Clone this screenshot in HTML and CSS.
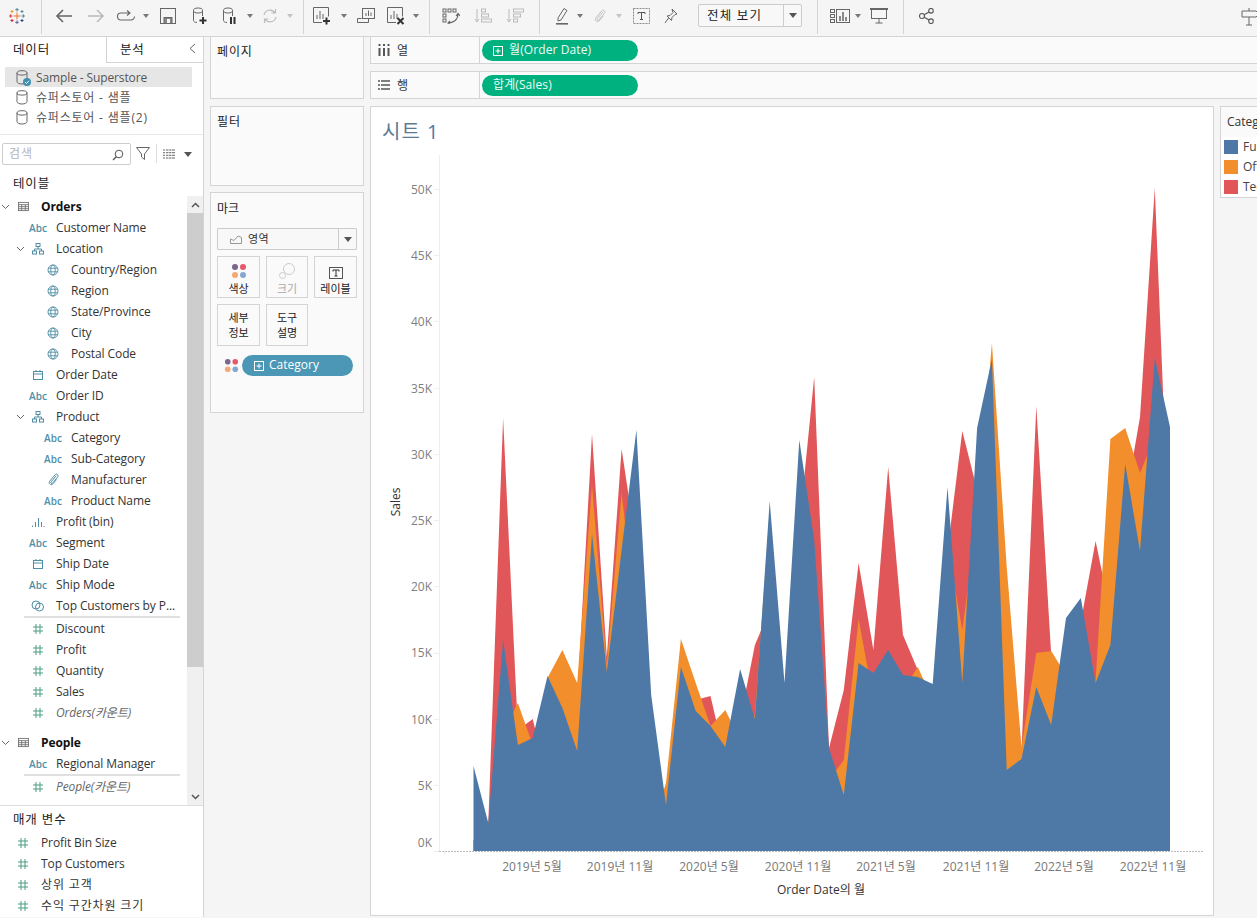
FILE: index.html
```html
<!DOCTYPE html>
<html lang="ko">
<head>
<meta charset="utf-8">
<title>Tableau - 시트 1</title>
<link rel="stylesheet" href="styles.css">
</head>
<body>
<svg class="defs" width="0" height="0" aria-hidden="true">
  <symbol id="db" viewBox="0 0 12 15"><g fill="none" stroke="#666" stroke-width="1"><ellipse cx="6" cy="2.900" rx="5" ry="2.200"/><path d="M1 2.900v8.800c0 1.300 2.200 2.300 5 2.300s5-1 5-2.300V2.900"/></g></symbol>
  <symbol id="hash" viewBox="0 0 12 12"><path d="M4 1v10M8 1v10M1 4h10M1 8h10" fill="none" stroke="#4a9d80" stroke-width="1"/></symbol>
  <symbol id="globe" viewBox="0 0 12 12"><g fill="none" stroke="#4f8ea6" stroke-width=".9"><circle cx="6" cy="6" r="5"/><ellipse cx="6" cy="6" rx="2.200" ry="5"/><path d="M1 4.200h10M1 7.800h10"/></g></symbol>
  <symbol id="cal" viewBox="0 0 12 12"><g fill="none" stroke="#4f8ea6" stroke-width="1"><rect x="1.500" y="2.500" width="9" height="8"/><path d="M1.500 5h9M4 1v2M8 1v2"/></g></symbol>
  <symbol id="hier" viewBox="0 0 12 12"><g fill="none" stroke="#4f8ea6" stroke-width="1"><rect x="4" y=".5" width="4" height="3"/><rect x=".5" y="8" width="4" height="3"/><rect x="7.500" y="8" width="4" height="3"/><path d="M6 3.500V6M2.500 8V6h7v2"/></g></symbol>
  <symbol id="clip" viewBox="0 0 12 12"><path d="M8.500 2.500 3.700 8.300c-.7 1 .6 2 1.400 1.100L9.800 3.700C11.200 1.800 8.800 0 7.400 1.700L2.500 7.500C.8 9.700 3.800 12 5.500 10l3.300-4" fill="none" stroke="#4f8ea6" stroke-width=".9"/></symbol>
  <symbol id="bins" viewBox="0 0 14 12"><path d="M1.500 11V9.500M4.500 11V6M7.500 11V2M10.500 11V6M13 11v-1" fill="none" stroke="#4f8ea6" stroke-width="1"/></symbol>
  <symbol id="sets" viewBox="0 0 14 12"><g fill="none" stroke="#4f8ea6" stroke-width="1"><circle cx="5" cy="5" r="4"/><circle cx="8.500" cy="7" r="4"/></g></symbol>
  <symbol id="table" viewBox="0 0 12 12"><g fill="none" stroke="#666" stroke-width=".9"><rect x=".5" y="1.500" width="11" height="9"/><path d="M.5 4h11M.5 6.200h11M.5 8.400h11M4 4v6.500M8 4v6.500"/></g></symbol>
  <symbol id="chev" viewBox="0 0 9 6"><path d="M1 1l3.500 3.500L8 1" fill="none" stroke="#666" stroke-width="1"/></symbol>
  <symbol id="plusbox" viewBox="0 0 10 10"><g fill="none" stroke="#fff" stroke-width="1"><rect x=".5" y=".5" width="9" height="9"/><path d="M5 2.500v5M2.500 5h5"/></g></symbol>
  <symbol id="dots" viewBox="0 0 16 16"><circle cx="4" cy="4" r="3" fill="#7b668c"/><circle cx="12" cy="4" r="3" fill="#e5596b"/><circle cx="4" cy="12" r="3" fill="#f2a877"/><circle cx="12" cy="12" r="3" fill="#86a8d0"/></symbol>
</svg>

<header class="toolbar">
  <div class="tgroup logo-group">
    <svg class="ic" width="18" height="18" viewBox="0 0 18 18"><g fill="none" stroke-width="1"><path d="M9 5.500v7M5.500 9h7" stroke="#e8762d"/><path d="M9 1v3.500M7.200 2.700h3.600" stroke="#5b879b"/><path d="M9 13.500V17M7.200 15.300h3.600" stroke="#5b6592"/><path d="M1 9h3.500M2.700 7.200v3.600" stroke="#d0414f"/><path d="M13.500 9H17M15.300 7.200v3.600" stroke="#4f8ea6"/><path d="M4 3v3M2.500 4.500h3" stroke="#e8a02d"/><path d="M14 3v3M12.500 4.500h3" stroke="#5b879b"/><path d="M4 12v3M2.500 13.500h3" stroke="#c72037"/><path d="M14 12v3M12.500 13.500h3" stroke="#1f447b"/></g></svg>
  </div>
  <div class="tgroup g-history">
    <span class="tb w32"><svg width="18" height="16" viewBox="0 0 18 16"><path d="M17 8H2M8 2 2 8l6 6" fill="none" stroke="#666" stroke-width="1.600"/></svg></span>
    <span class="tb w32"><svg width="18" height="16" viewBox="0 0 18 16"><path d="M1 8h15M10 2l6 6-6 6" fill="none" stroke="#bbb" stroke-width="1.600"/></svg></span>
    <span class="tb w28"><svg width="20" height="12" viewBox="0 0 20 12"><path d="M14 3H5a3.500 3.500 0 0 0 0 7h10a3.500 3.500 0 0 0 3.500-3.500M11 0.500 14 3l-3 2.500" fill="none" stroke="#666" stroke-width="1.100"/></svg></span>
    <span class="tb w12"><i class="caret"></i></span>
    <span class="tb w32"><svg width="16" height="16" viewBox="0 0 16 16"><g fill="none" stroke="#666" stroke-width="1"><rect x=".5" y=".5" width="15" height="15"/><rect x="4" y="9.500" width="8" height="6" fill="#888"/><rect x="7" y="11" width="3" height="4" fill="#f5f5f5" stroke="none"/></g></svg></span>
    <span class="tb w32"><svg width="16" height="18" viewBox="0 0 16 18"><g fill="none" stroke="#666" stroke-width="1"><ellipse cx="6" cy="3.500" rx="4.500" ry="2.500"/><path d="M1.500 3.500v10c0 1 1.500 2 3.500 2M10.500 3.500V9"/></g><path d="M11 10v7M7.500 13.500h7" stroke="#333" stroke-width="2"/></svg></span>
    <span class="tb w28"><svg width="16" height="18" viewBox="0 0 16 18"><g fill="none" stroke="#666" stroke-width="1"><ellipse cx="6" cy="3.500" rx="4.500" ry="2.500"/><path d="M1.500 3.500v10c0 1 1.500 2 3.500 2M10.500 3.500V9"/></g><path d="M9 10v7M12.500 10v7" stroke="#333" stroke-width="2"/></svg></span>
    <span class="tb w12"><i class="caret"></i></span>
    <span class="tb w28"><svg width="18" height="16" viewBox="0 0 18 16"><path d="M3 7a6 6 0 0 1 11-2M15 9a6 6 0 0 1-11 2M14.500 1v4h-4M3.500 15v-4h4" fill="none" stroke="#bbb" stroke-width="1.200"/></svg></span>
    <span class="tb w12"><i class="caret off"></i></span>
  </div>
  <div class="tgroup g-sheets">
    <span class="tb w32"><svg width="18" height="18" viewBox="0 0 18 18"><g fill="none" stroke="#666" stroke-width="1"><path d="M9 15.500H.5V.5h15v9"/><path d="M4 12V8M7 12V4M10 12V7"/></g><path d="M13.500 10.500v7M10 14h7" stroke="#333" stroke-width="2"/></svg></span>
    <span class="tb w12"><i class="caret"></i></span>
    <span class="tb w32"><svg width="18" height="16" viewBox="0 0 18 16"><g fill="none" stroke="#666" stroke-width="1"><path d="M4.500 10.500h-4v4h11v-4"/><rect x="5.500" y=".5" width="12" height="10" fill="#f5f5f5"/><path d="M9 8V5M11.500 8V2.500M14 8V4.500"/></g></svg></span>
    <span class="tb w28"><svg width="18" height="18" viewBox="0 0 18 18"><g fill="none" stroke="#666" stroke-width="1"><path d="M9 15.500H.5V.5h15v9"/><path d="M4 12V8M7 12V4M10 12V7"/></g><path d="M10.500 11l6 6M16.500 11l-6 6" stroke="#333" stroke-width="2"/></svg></span>
    <span class="tb w12"><i class="caret"></i></span>
  </div>
  <div class="tgroup g-sort">
    <span class="tb w32"><svg width="18" height="16" viewBox="0 0 18 16"><g fill="none" stroke="#666" stroke-width="1"><rect x="1" y="1" width="3" height="3"/><rect x="6" y="1" width="3" height="3"/><rect x="11" y="1" width="3" height="3"/><rect x="1" y="6" width="3" height="3"/><rect x="1" y="11" width="3" height="3"/><path d="M6 15c5 0 10-3 10-9M14 8l2-2.500 2 2.500M8 13l-2 2 2 1" stroke-width="1.100"/></g></svg></span>
    <span class="tb w32"><svg width="18" height="16" viewBox="0 0 18 16"><g fill="none" stroke="#bbb" stroke-width="1"><path d="M3 1v13M1 11l2 3 2-3"/><rect x="7.500" y="1" width="4" height="3"/><rect x="7.500" y="6" width="7" height="3"/><rect x="7.500" y="11" width="10" height="3"/></g></svg></span>
    <span class="tb w32"><svg width="18" height="16" viewBox="0 0 18 16"><g fill="none" stroke="#bbb" stroke-width="1"><path d="M3 1v13M1 11l2 3 2-3"/><rect x="7.500" y="1" width="10" height="3"/><rect x="7.500" y="6" width="7" height="3"/><rect x="7.500" y="11" width="4" height="3"/></g></svg></span>
  </div>
  <div class="tgroup g-format">
    <span class="tb w24"><svg width="14" height="18" viewBox="0 0 14 18"><path d="M3 11 9 1.500l3 2-6 9.500-3 1z" fill="none" stroke="#666"/><path d="M1 16.800h12" stroke="#666" stroke-width="1.600"/></svg></span>
    <span class="tb w12"><i class="caret"></i></span>
    <span class="tb w27"><svg width="14" height="16" viewBox="0 0 12 12"><path d="M8.500 2.500 3.700 8.300c-.7 1 .6 2 1.400 1.100L9.800 3.700C11.200 1.800 8.800 0 7.400 1.700L2.500 7.500C.8 9.700 3.800 12 5.500 10l3.300-4" fill="none" stroke="#bbb" stroke-width=".8"/></svg></span>
    <span class="tb w12"><i class="caret off"></i></span>
    <span class="tb w32"><svg width="17" height="16" viewBox="0 0 17 16"><rect x=".5" y=".5" width="16" height="15" fill="none" stroke="#888" stroke-dasharray="2 1"/><path d="M5 4.500h7M8.500 4.500v7M7 11.500h3M5 4.500V6M12 4.500V6" fill="none" stroke="#555"/></svg></span>
    <span class="tb w28"><svg width="14" height="16" viewBox="0 0 14 16"><path d="M8 1l5 5-2 .5-3 3-.5 3L3 8l3-.5 3-3zM4.500 10 1 15" fill="none" stroke="#666"/></svg></span>
    <div class="fit-select"><span class="fit-label">전체 보기</span><span class="fit-arrow"><i class="caret dark"></i></span></div>
  </div>
  <div class="tgroup g-show">
    <span class="tb w24"><svg width="20" height="14" viewBox="0 0 20 14"><g fill="none" stroke="#666" stroke-width="1"><rect x=".5" y=".5" width="4" height="3"/><rect x=".5" y="5.500" width="4" height="3"/><rect x=".5" y="10.500" width="4" height="3"/><rect x="6.500" y=".5" width="13" height="13"/><path d="M10 12V7M13 12V3M16 12V8" stroke-width="1.500"/></g></svg></span>
    <span class="tb w12"><i class="caret"></i></span>
    <span class="tb w30"><svg width="18" height="16" viewBox="0 0 18 16"><g fill="none" stroke="#666" stroke-width="1"><path d="M0 1h18" stroke-width="2"/><rect x="1.500" y="1" width="15" height="9.500"/><path d="M9 10.500V15M5.500 15h7"/></g></svg></span>
  </div>
  <div class="tgroup g-share">
    <span class="tb w32"><svg width="15" height="16" viewBox="0 0 15 16"><g fill="none" stroke="#555" stroke-width="1.100"><circle cx="3" cy="8" r="2.500"/><circle cx="12" cy="2.800" r="2.300"/><circle cx="12" cy="13.200" r="2.300"/><path d="M5.200 6.800l4.800-2.800M5.200 9.200l4.800 2.800"/></g></svg></span>
  </div>
  <span class="tb guide"><svg width="19" height="18" viewBox="0 0 19 18"><path d="M1 3h14l3 3-3 3H1zM8 0v3M8 9v8M5 17h6" fill="none" stroke="#666"/></svg></span>
</header>

<main class="workspace">
  <aside class="data-pane">
    <div class="tabs">
      <div class="tab active ko">데이터</div>
      <div class="tab"><span class="ko">분석</span><svg class="collapse" width="7" height="11" viewBox="0 0 7 11"><path d="M6 1 1 5.500 6 10" fill="none" stroke="#666"/></svg></div>
    </div>
    <div class="sources">
      <div class="source selected"><svg class="db" width="12" height="15"><use href="#db"/></svg><svg class="db-check" width="8" height="8" viewBox="0 0 8 8"><circle cx="4" cy="4" r="4" fill="#3f8fb0"/><path d="M2 4l1.500 1.500L6 2.800" fill="none" stroke="#fff"/></svg><span class="src-name">Sample - Superstore</span></div>
      <div class="source"><svg class="db" width="12" height="15"><use href="#db"/></svg><span class="src-name ko">슈퍼스토어 - 샘플</span></div>
      <div class="source"><svg class="db" width="12" height="15"><use href="#db"/></svg><span class="src-name ko">슈퍼스토어 - 샘플(2)</span></div>
    </div>
    <div class="search-row">
      <div class="search"><span>검색</span><svg width="12" height="12" viewBox="0 0 12 12"><circle cx="7" cy="5" r="3.800" fill="none" stroke="#555"/><path d="M4.300 7.800 1 11" stroke="#555" stroke-width="1.300"/></svg></div>
      <svg class="funnel" width="14" height="13" viewBox="0 0 14 13"><path d="M.5.500h13L8.500 7v5.500L5.500 10V7z" fill="none" stroke="#666"/></svg>
      <span class="vbar"></span>
      <svg class="gridic" width="12" height="10" viewBox="0 0 12 10"><path d="M0 1h2M3 1h9M0 3.700h2M3 3.700h9M0 6.300h2M3 6.300h9M0 9h2M3 9h9" stroke="#666"/><path d="M5.500 0v10M8.500 0v10" stroke="#f5f5f5" stroke-width=".6"/></svg>
      <i class="caret dark gridcaret"></i>
    </div>
    <div class="section-head ko">테이블</div>
    <div class="fields">
      <div class="field-list">
        <div class="row d0x"><svg class="chev" width="9" height="6"><use href="#chev"/></svg><span class="ico"><svg width="11" height="11"><use href="#table"/></svg></span><b class="name">Orders</b></div>
        <div class="row d1"><span class="ico abc">Abc</span><span class="name">Customer Name</span></div>
        <div class="row d1x"><svg class="chev" width="9" height="6"><use href="#chev"/></svg><span class="ico"><svg width="12" height="12"><use href="#hier"/></svg></span><span class="name">Location</span></div>
        <div class="row d2"><span class="ico"><svg width="12" height="12"><use href="#globe"/></svg></span><span class="name">Country/Region</span></div>
        <div class="row d2"><span class="ico"><svg width="12" height="12"><use href="#globe"/></svg></span><span class="name">Region</span></div>
        <div class="row d2"><span class="ico"><svg width="12" height="12"><use href="#globe"/></svg></span><span class="name">State/Province</span></div>
        <div class="row d2"><span class="ico"><svg width="12" height="12"><use href="#globe"/></svg></span><span class="name">City</span></div>
        <div class="row d2"><span class="ico"><svg width="12" height="12"><use href="#globe"/></svg></span><span class="name">Postal Code</span></div>
        <div class="row d1"><span class="ico"><svg width="12" height="12"><use href="#cal"/></svg></span><span class="name">Order Date</span></div>
        <div class="row d1"><span class="ico abc">Abc</span><span class="name">Order ID</span></div>
        <div class="row d1x"><svg class="chev" width="9" height="6"><use href="#chev"/></svg><span class="ico"><svg width="12" height="12"><use href="#hier"/></svg></span><span class="name">Product</span></div>
        <div class="row d2"><span class="ico abc">Abc</span><span class="name">Category</span></div>
        <div class="row d2"><span class="ico abc">Abc</span><span class="name">Sub-Category</span></div>
        <div class="row d2"><span class="ico"><svg width="13" height="13"><use href="#clip"/></svg></span><span class="name">Manufacturer</span></div>
        <div class="row d2"><span class="ico abc">Abc</span><span class="name">Product Name</span></div>
        <div class="row d1"><span class="ico"><svg width="14" height="12"><use href="#bins"/></svg></span><span class="name">Profit (bin)</span></div>
        <div class="row d1"><span class="ico abc">Abc</span><span class="name">Segment</span></div>
        <div class="row d1"><span class="ico"><svg width="12" height="12"><use href="#cal"/></svg></span><span class="name">Ship Date</span></div>
        <div class="row d1"><span class="ico abc">Abc</span><span class="name">Ship Mode</span></div>
        <div class="row d1"><span class="ico"><svg width="14" height="12"><use href="#sets"/></svg></span><span class="name">Top Customers by P...</span></div>
        <div class="divider thick"></div>
        <div class="row d1"><span class="ico"><svg width="12" height="12"><use href="#hash"/></svg></span><span class="name">Discount</span></div>
        <div class="row d1"><span class="ico"><svg width="12" height="12"><use href="#hash"/></svg></span><span class="name">Profit</span></div>
        <div class="row d1"><span class="ico"><svg width="12" height="12"><use href="#hash"/></svg></span><span class="name">Quantity</span></div>
        <div class="row d1"><span class="ico"><svg width="12" height="12"><use href="#hash"/></svg></span><span class="name">Sales</span></div>
        <div class="row d1"><span class="ico"><svg width="12" height="12"><use href="#hash"/></svg></span><em class="name">Orders(카운트)</em></div>
        <div class="row d0x table-gap"><svg class="chev" width="9" height="6"><use href="#chev"/></svg><span class="ico"><svg width="11" height="11"><use href="#table"/></svg></span><b class="name">People</b></div>
        <div class="row d1"><span class="ico abc">Abc</span><span class="name">Regional Manager</span></div>
        <div class="divider thick"></div>
        <div class="row d1"><span class="ico"><svg width="12" height="12"><use href="#hash"/></svg></span><em class="name">People(카운트)</em></div>
      </div>
      <div class="scrollbar">
        <span class="sb-btn"><svg width="9" height="6" viewBox="0 0 9 6"><path d="M1 5l3.500-3.500L8 5" fill="none" stroke="#555" stroke-width="1.500"/></svg></span>
        <span class="sb-thumb"></span>
        <span class="sb-rest"></span>
        <span class="sb-btn"><svg width="9" height="6" viewBox="0 0 9 6"><path d="M1 1l3.500 3.500L8 1" fill="none" stroke="#555" stroke-width="1.500"/></svg></span>
      </div>
    </div>
    <div class="params">
      <div class="section-head param-head ko">매개 변수</div>
      <div class="row p0"><span class="ico"><svg width="12" height="12"><use href="#hash"/></svg></span><span class="name">Profit Bin Size</span></div>
      <div class="row p0"><span class="ico"><svg width="12" height="12"><use href="#hash"/></svg></span><span class="name">Top Customers</span></div>
      <div class="row p0"><span class="ico"><svg width="12" height="12"><use href="#hash"/></svg></span><span class="name ko">상위 고객</span></div>
      <div class="row p0"><span class="ico"><svg width="12" height="12"><use href="#hash"/></svg></span><span class="name ko">수익 구간차원 크기</span></div>
    </div>
  </aside>

  <section class="cards-pane">
    <div class="card pages"><div class="card-title ko">페이지</div></div>
    <div class="card filters"><div class="card-title ko">필터</div></div>
    <div class="card marks">
      <div class="card-title">마크</div>
      <div class="mark-select">
        <svg width="12" height="10" viewBox="0 0 12 10"><path d="M.5 9.500V5L4 6.500 8 2l3.500 1.500v6z" fill="none" stroke="#999"/></svg>
        <span class="mark-label">영역</span>
        <span class="mark-arrow"><i class="caret dark"></i></span>
      </div>
      <div class="mark-grid">
        <div class="mark-btn"><svg width="16" height="16"><use href="#dots"/></svg><span>색상</span></div>
        <div class="mark-btn off"><svg width="16" height="16" viewBox="0 0 16 16"><g fill="none" stroke="#ccc"><circle cx="10" cy="6" r="5.500"/><circle cx="3.500" cy="12.500" r="3"/></g></svg><span>크기</span></div>
        <div class="mark-btn"><svg width="14" height="12" viewBox="0 0 14 12"><rect x=".5" y=".5" width="13" height="11" fill="none" stroke="#555"/><path d="M4 3h6M7 3v6M5.500 9h3M4 3v1.500M10 3v1.500" fill="none" stroke="#333"/></svg><span>레이블</span></div>
        <div class="mark-btn text"><span>세부</span><span>정보</span></div>
        <div class="mark-btn text"><span>도구</span><span>설명</span></div>
      </div>
      <div class="mark-pill-row">
        <svg width="16" height="16"><use href="#dots"/></svg>
        <div class="pill blue"><svg width="10" height="10"><use href="#plusbox"/></svg><span>Category</span></div>
      </div>
    </div>
  </section>

  <section class="view-pane">
    <div class="shelf">
      <div class="shelf-label"><svg width="12" height="12" viewBox="0 0 12 12"><path d="M1.500 4v8M6 4v8M10.500 4v8" stroke="#555" stroke-width="2"/><path d="M1.500 0v2M6 0v2M10.500 0v2" stroke="#555" stroke-width="2"/></svg><span class="shelf-text">열</span></div>
      <div class="shelf-body"><div class="pill green"><svg width="10" height="10"><use href="#plusbox"/></svg><span>월(Order Date)</span></div></div>
    </div>
    <div class="shelf">
      <div class="shelf-label"><svg width="12" height="12" viewBox="0 0 12 12"><path d="M0 2h2M3 2h9M0 6h2M3 6h9M0 10h2M3 10h9" stroke="#555" stroke-width="1.500"/></svg><span class="shelf-text">행</span></div>
      <div class="shelf-body"><div class="pill green row-pill"><span>합계(Sales)</span></div></div>
    </div>
    <div class="view-body">
      <div class="sheet">
        <div class="sheet-title">시트 <span class="title-num">1</span></div>
        <svg class="chart" width="842" height="763" viewBox="371 151 842 763">
          <g class="gridlines">
            <path d="M439.500 155V851"/>
            <path d="M434 851.500h5M434 785.500h5M434 719.500h5M434 653.500h5M434 586.500h5M434 520.500h5M434 454.500h5M434 388.500h5M434 321.500h5M434 255.500h5M434 189.500h5"/>
            <path d="M444.500 851v4M532.500 851v4M621.500 851v4M710.500 851v4M799.500 851v4M887.500 851v4M977.500 851v4M1065.500 851v4M1154.500 851v4"/>
          </g>
          <polygon fill="#e15759" points="473.5,851 473.5,840 488.3,823 503.1,418 517.9,730 532.7,719 547.5,780 562.4,720 577.2,700 592,434 606.8,657 621.6,449 636.4,547 651.2,830 666,800 680.9,720 695.7,700 710.5,696 725.3,760 740.1,720 754.9,645 769.7,610 784.5,700 799.3,527 814.2,377 829,748 843.8,690 858.6,563 873.4,650 888.2,467 903,635 917.8,670 932.7,700 947.5,551 962.3,431 977.1,490 991.9,500 1006.7,800 1021.5,750 1036.3,406 1051.2,655 1066,700 1080.8,622 1095.6,541 1110.4,613 1125.2,503 1140,417 1154.8,188 1170,565 1170,851"/>
          <polygon fill="#f28e2b" points="473.5,851 473.5,840 488.3,823 503.1,732 517.9,703 532.7,745 547.5,678 562.4,650 577.2,683 592,485 606.8,665 621.6,493 636.4,620 651.2,830 666,783 680.9,639 695.7,683 710.5,726 725.3,710 740.1,740 754.9,715 769.7,510 784.5,720 799.3,600 814.2,600 829,780 843.8,760 858.6,619 873.4,699 888.2,700 903,690 917.8,667 932.7,700 947.5,545 962.3,630 977.1,520 991.9,343 1006.7,567 1021.5,747 1036.3,653 1051.2,651 1066,675 1080.8,700 1095.6,681 1110.4,439 1125.2,428 1140,473 1154.8,437 1170,600 1170,851"/>
          <polygon fill="#4e79a7" points="473.5,851 473.5,766 488.3,823 503.1,640 517.9,745 532.7,738 547.5,676 562.4,708 577.2,751 592,534 606.8,672 621.6,550 636.4,430 651.2,695 666,805 680.9,667 695.7,711 710.5,726 725.3,747 740.1,669 754.9,719 769.7,501 784.5,683 799.3,440 814.2,540 829,748 843.8,795 858.6,663 873.4,673 888.2,650 903,675 917.8,677 932.7,684 947.5,487 962.3,683 977.1,428 991.9,359 1006.7,770 1021.5,759 1036.3,687 1051.2,725 1066,618 1080.8,598 1095.6,683 1110.4,645 1125.2,464 1140,551 1154.8,358 1170,427 1170,851"/>
          <path class="baseline" d="M439 851.500H1203"/>
          <g class="ylabels">
            <text x="432" y="847">0K</text><text x="432" y="790">5K</text><text x="432" y="724">10K</text><text x="432" y="657">15K</text><text x="432" y="591">20K</text><text x="432" y="525">25K</text><text x="432" y="459">30K</text><text x="432" y="393">35K</text><text x="432" y="326">40K</text><text x="432" y="260">45K</text><text x="432" y="194">50K</text>
          </g>
          <g class="xlabels">
            <text x="532" y="871">2019년 5월</text><text x="620" y="871">2019년 11월</text><text x="709" y="871">2020년 5월</text><text x="798" y="871">2020년 11월</text><text x="886" y="871">2021년 5월</text><text x="976" y="871">2021년 11월</text><text x="1064" y="871">2022년 5월</text><text x="1153" y="871">2022년 11월</text>
          </g>
          <text class="axis-title" x="821" y="894">Order Date의 월</text>
          <text class="axis-title" transform="translate(400 502) rotate(-90)">Sales</text>
        </svg>
      </div>
      <aside class="legend">
        <div class="legend-title">Category</div>
        <div class="legend-item"><i class="swatch s-blue"></i><span>Furniture</span></div>
        <div class="legend-item"><i class="swatch s-orange"></i><span>Office Supplies</span></div>
        <div class="legend-item"><i class="swatch s-red"></i><span>Technology</span></div>
      </aside>
    </div>
  </section>
</main>
</body>
</html>
```
FILE: styles.css
```css
* { box-sizing: border-box; }
html, body { margin: 0; height: 100%; overflow: hidden; }
body {
  width: 1257px; height: 918px; background: #f5f5f5; color: #333;
  font: 12px/1.2 "Open Sans", "Noto Sans CJK KR", sans-serif;
}
.defs { position: absolute; }
svg { display: block; flex: none; }
.ko { letter-spacing: .85px; }

/* toolbar */
.toolbar { height: 37px; display: flex; align-items: flex-start; border-bottom: 1px solid #d4d4d4; background: #f5f5f5; white-space: nowrap; overflow: hidden; }
.tgroup { height: 34px; display: flex; align-items: center; border-right: 1px solid #d4d4d4; padding-bottom: 3px; flex: none; }
.logo-group { width: 42px; padding-left: 8px; }
.g-history { width: 262px; padding-left: 6px; }
.g-sheets { width: 126px; padding-left: 2px; }
.g-sort { width: 110px; padding-left: 5px; }
.g-format { width: 278px; padding-left: 10px; }
.g-show { width: 86px; padding-left: 10px; }
.g-share { width: 0; border: 0; padding-left: 6px; }
.tb { display: flex; align-items: center; justify-content: center; height: 20px; flex: none; }
.w12 { width: 12px; } .w24 { width: 24px; } .w27 { width: 27px; } .w28 { width: 28px; } .w30 { width: 30px; } .w32 { width: 32px; }
.caret { display: block; width: 0; height: 0; border: 3.5px solid transparent; border-top: 4px solid #777; border-bottom: 0; }
.caret.off { border-top-color: #c4c4c4; }
.caret.dark { border-top-color: #555; border-left-width: 4.5px; border-right-width: 4.5px; border-top-width: 5px; }
.guide { margin-left: auto; margin-right: -3px; margin-top: 7px; width: 20px; }
.fit-select { margin-left: 13px; width: 104px; height: 23px; display: flex; border: 1px solid #ccc; border-radius: 2px; background: #f8f8f8; }
.fit-label { flex: 1; padding-left: 8px; line-height: 21px; font-size: 12.500px; letter-spacing: 1.200px; color: #222; }
.fit-arrow { width: 18px; border-left: 1px solid #ccc; display: flex; align-items: center; justify-content: center; }

/* layout */
.workspace { display: flex; height: 881px; margin-top: -1px; }
.data-pane { width: 204px; flex: none; background: #fff; border-right: 1px solid #d4d4d4; margin-top: 1px; display: flex; flex-direction: column; overflow: hidden; }
.cards-pane { width: 154px; margin-left: 6px; flex: none; display: flex; flex-direction: column; gap: 7px; }
.view-pane { width: 887px; margin-left: 6px; flex: none; display: flex; flex-direction: column; gap: 7px; }

/* data pane */
.tabs { display: flex; height: 26px; flex: none; font-size: 12.500px; }
.tab { line-height: 25px; color: #222; }
.tab.active { width: 106px; padding-left: 13px; }
.tab:not(.active) { flex: 1; background: #fff; border-left: 1px solid #d4d4d4; border-bottom: 1px solid #d4d4d4; padding-left: 13px; display: flex; align-items: center; justify-content: space-between; padding-right: 7px; }
.collapse { margin-bottom: 2px; }
.sources { padding: 4px 11px 7px 5px; border-bottom: 1px solid #e6e6e6; flex: none; height: 72px; }
.source { height: 20px; display: flex; align-items: center; padding-left: 11px; gap: 8px; color: #555; position: relative; }
.src-name { padding-top: 2px; letter-spacing: -.12px; }
.src-name.ko { letter-spacing: .8px; }
.source.selected { background: #e6e6e6; }
.db-check { position: absolute; left: 18px; top: 11px; }
.search-row { height: 41px; padding: 8px 0 0 2px; display: flex; align-items: flex-start; flex: none; }
.search { width: 129px; height: 22px; border: 1px solid #ccc; border-radius: 2px; display: flex; align-items: center; justify-content: space-between; padding: 1px 6px 0; color: #b5b5b5; font-size: 12px; letter-spacing: 1px; }
.funnel { margin: 4px 0 0 5px; }
.vbar { width: 1px; height: 19px; background: #ddd; margin: 1px 0 0 6px; }
.gridic { margin: 6px 0 0 6px; }
.gridcaret { margin: 9px 0 0 9px; }
.section-head { height: 20px; padding-left: 13px; font-size: 12.500px; line-height: 16px; color: #222; flex: none; }
.fields { height: 610px; flex: none; display: flex; border-bottom: 1px solid #ddd; }
.field-list { width: 187px; flex: none; overflow: hidden; }
.row { height: 21px; display: flex; align-items: center; white-space: nowrap; }
.d0x { padding-left: 1px; }
.d1 { padding-left: 26px; }
.d1x { padding-left: 16px; }
.d2 { padding-left: 41px; }
.p0 { padding-left: 11px; }
.chev { width: 9px; height: 6px; margin-right: 1px; }
.ico { width: 24px; margin-right: 6px; display: flex; justify-content: center; align-items: center; flex: none; }
.abc { font: 600 10px/1 "Open Sans", sans-serif; color: #4f8ea6; }
.name { color: #333; letter-spacing: -.1px; line-height: 18px; }
.name.ko { letter-spacing: .85px; }
.d0x .name { color: #111; font-weight: 700; }
em.name { font-style: italic; color: #666; }
.divider.thick { height: 2px; margin-left: 24px; width: 156px; background: #e0e0e0; }
.table-gap { margin-top: 9px; }
.scrollbar { width: 16px; flex: none; background: #f0f0f0; display: flex; flex-direction: column; }
.sb-btn { height: 17px; display: flex; align-items: center; justify-content: center; flex: none; }
.sb-thumb { height: 454px; background: #cdcdcd; flex: none; }
.sb-rest { flex: 1; }
.params { flex: 1; padding-top: 5px; }
.param-head { height: 21px; line-height: 18px; }

/* cards */
.card { background: #fafafa; border: 1px solid #d4d4d4; padding: 7px 6px; flex: none; }
.card-title { font-size: 12px; line-height: 16px; color: #222; }
.pages { height: 63px; }
.filters { height: 80px; }
.marks { height: 221px; margin-top: -1px; padding-top: 8px; }
.mark-select { margin-top: 11px; height: 22px; display: flex; align-items: center; border: 1px solid #ccc; padding-left: 12px; width: 140px; background: #f8f8f8; border-radius: 1px; }
.mark-label { flex: 1; padding-left: 6px; font-size: 11px; letter-spacing: .4px; color: #333; }
.mark-arrow { width: 18px; height: 20px; border-left: 1px solid #ccc; display: flex; align-items: center; justify-content: center; }
.mark-grid { margin-top: 6px; display: grid; grid-template-columns: 43px 42px 43px; grid-auto-rows: 42px; gap: 6px; }
.mark-btn { border: 1px solid #d4d4d4; display: flex; flex-direction: column; align-items: center; justify-content: flex-end; padding-bottom: 2px; gap: 3px; font-size: 11px; line-height: 13px; color: #222; }
.mark-btn.off { color: #aaa; }
.mark-btn.text { justify-content: center; padding: 0; gap: 2px; }
.mark-pill-row { display: flex; align-items: center; margin-top: 9px; padding-left: 7px; gap: 3px; }
.mark-pill-row svg { width: 15px; height: 15px; }
.mark-pill-row .pill svg { width: 10px; height: 10px; }

/* pills */
.pill { height: 21px; border-radius: 11px; color: #fff; display: flex; align-items: center; font-size: 12px; white-space: nowrap; }
.pill.green { width: 156px; background: #00b180; padding-left: 11px; gap: 6px; color: #eefaf6; letter-spacing: .1px; }
.pill.row-pill { padding-left: 11px; }
.pill.blue { width: 111px; background: #4b97b5; padding-left: 12px; gap: 5px; }

/* shelves */
.shelf { height: 28px; display: flex; background: #fafafa; border-top: 1px solid #d4d4d4; border-bottom: 1px solid #d4d4d4; border-left: 1px solid #d4d4d4; flex: none; }
.shelf-label { width: 109px; display: flex; align-items: center; padding-left: 7px; gap: 7px; border-right: 1px solid #d4d4d4; color: #333; }
.shelf-text { padding-top: 2px; }
.shelf-body { flex: 1; padding: 3px 0 0 2px; }
.view-body { display: flex; height: 810px; flex: none; }
.sheet { width: 844px; height: 810px; background: #fff; border: 1px solid #d4d4d4; flex: none; }
.sheet-title { height: 44px; padding: 11px 0 0 11px; font-size: 20px; line-height: 28px; color: #5c7a94; letter-spacing: 1px; }
.title-num { color: #4e79a7; }
.chart text { font-family: "Open Sans", "Noto Sans CJK KR", sans-serif; }
.gridlines path { stroke: #eee; fill: none; }
.baseline { stroke: #bbb; stroke-dasharray: 2 1; fill: none; }
.ylabels text { font-size: 12px; fill: #808080; text-anchor: end; }
.xlabels text { font-size: 12px; fill: #777; text-anchor: middle; }
.axis-title { font-size: 12px; fill: #333; text-anchor: middle; }

/* legend */
.legend { width: 60px; margin-left: 6px; height: 92px; background: #fff; border: 1px solid #d4d4d4; overflow: hidden; white-space: nowrap; flex: none; padding: 0; }
.legend-title { height: 30px; padding: 8px 0 0 6px; font-size: 12px; background: #fafafa; color: #333; }
.legend-item { height: 20px; display: flex; align-items: center; padding-left: 3px; gap: 5px; color: #444; }
.swatch { width: 14px; height: 14px; display: block; flex: none; }
.s-blue { background: #4e79a7; }
.s-orange { background: #f28e2b; }
.s-red { background: #e15759; }
```
